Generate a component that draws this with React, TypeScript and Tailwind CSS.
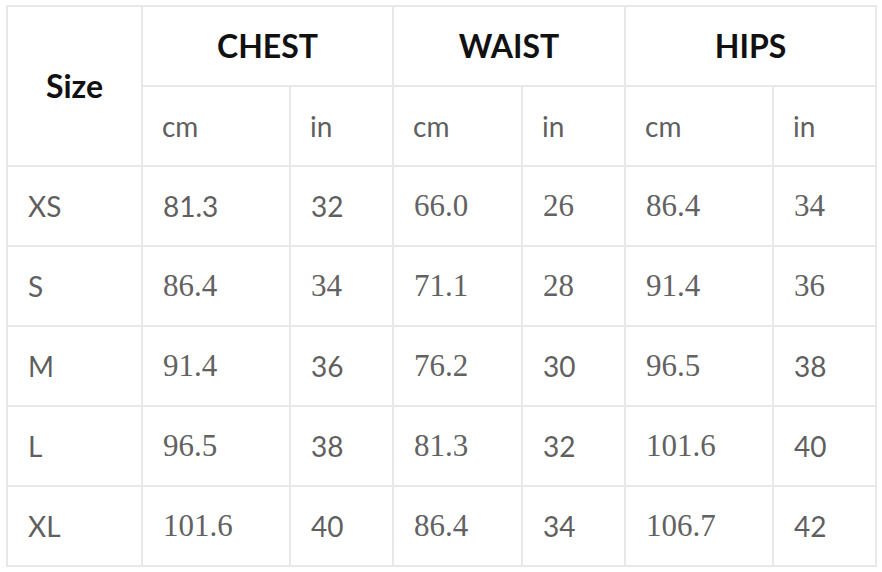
import React from 'react';

type Cell = { v: string; serif?: boolean };

const sans = (v: string): Cell => ({ v });
const serif = (v: string): Cell => ({ v, serif: true });

const rows: { size: string; cells: Cell[] }[] = [
  { size: 'XS', cells: [sans('81.3'), sans('32'), serif('66.0'), serif('26'), serif('86.4'), serif('34')] },
  { size: 'S', cells: [serif('86.4'), serif('34'), serif('71.1'), serif('28'), serif('91.4'), serif('36')] },
  { size: 'M', cells: [serif('91.4'), sans('36'), serif('76.2'), sans('30'), serif('96.5'), sans('38')] },
  { size: 'L', cells: [serif('96.5'), sans('38'), serif('81.3'), sans('32'), serif('101.6'), sans('40')] },
  { size: 'XL', cells: [serif('101.6'), sans('40'), serif('86.4'), sans('34'), serif('106.7'), sans('42')] },
];

const groups = ['CHEST', 'WAIST', 'HIPS'];
const widths = [135, 148, 103, 129, 103, 148, 103];

const border = 'border-2 border-[#e8e8e8]';
const sansText = "font-['Lato',sans-serif] font-normal text-[28px] text-[#5f5f5f]";
const serifText = "font-['Liberation_Serif',serif] font-normal text-[31px] text-[#626262]";

export default function App() {
  return (
    <div className="min-h-screen bg-white pl-[6px] pt-[5px]">
      <table className="table-fixed border-collapse w-[871px]">
        <colgroup>
          {widths.map((w, i) => (
            <col key={i} style={{ width: w }} />
          ))}
        </colgroup>
        <thead>
          <tr className="h-[80px]">
            <th
              rowSpan={2}
              className={`${border} font-['Lato',sans-serif] font-bold text-[32px] text-[#111] text-center align-middle`}
            >
              Size
            </th>
            {groups.map((g) => (
              <th
                key={g}
                colSpan={2}
                className={`${border} font-['Lato',sans-serif] font-bold text-[32px] text-[#111] text-center align-middle`}
              >
                {g}
              </th>
            ))}
          </tr>
          <tr className="h-[80px]">
            {groups.map((g) => (
              <React.Fragment key={g}>
                <th className={`${border} ${sansText} text-left pl-[19px] align-middle`}>cm</th>
                <th className={`${border} ${sansText} text-left pl-[19px] align-middle`}>in</th>
              </React.Fragment>
            ))}
          </tr>
        </thead>
        <tbody>
          {rows.map((r) => (
            <tr key={r.size} className="h-[80px]">
              <td className={`${border} ${sansText} pl-[20px] align-middle`}>{r.size}</td>
              {r.cells.map((c, i) => (
                <td
                  key={i}
                  className={`${border} ${c.serif ? serifText : sansText} pl-[20px] align-middle`}
                >
                  {c.v}
                </td>
              ))}
            </tr>
          ))}
        </tbody>
      </table>
    </div>
  );
}
